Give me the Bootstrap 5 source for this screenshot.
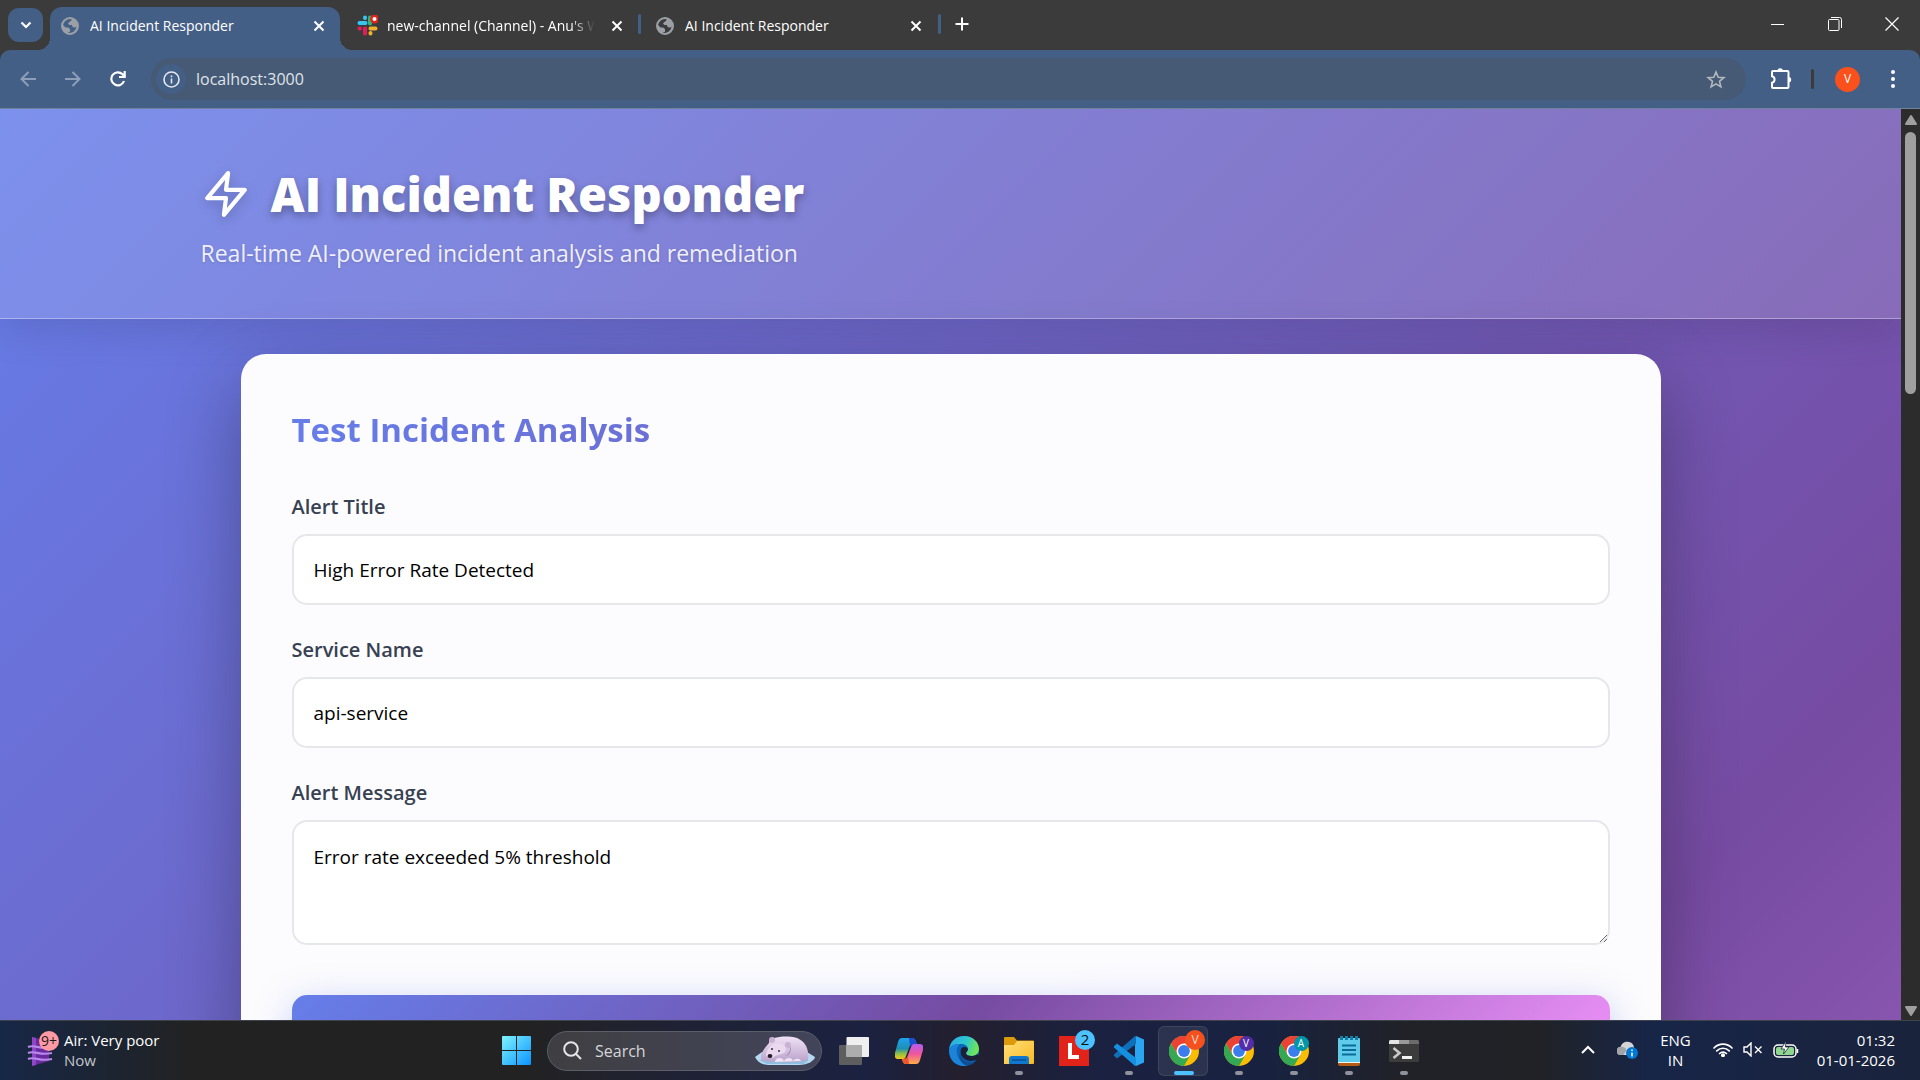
<!DOCTYPE html>
<html lang="en">
<head>
<meta charset="utf-8">
<meta name="viewport" content="width=device-width, initial-scale=1">
<title>AI Incident Responder</title>
<link href="https://cdn.jsdelivr.net/npm/bootstrap@5.3.0/dist/css/bootstrap.min.css" rel="stylesheet">
<style>
  :root { --frame: #3b3b3b; --bar: #445f86; --brand: linear-gradient(135deg, #667eea 0%, #764ba2 50%, #f093fb 100%); }
  body { font-family: "Open Sans", "Noto Sans", sans-serif; font-size: 14px; line-height: 20px; }
  svg { display: block; flex: none; }
  .plain { background: none; border: 0; padding: 0; color: #fff; display: flex; align-items: center; justify-content: center; flex: none; }

  /* tab strip */
  .tabstrip { background: var(--frame); height: 50px; color: #fff; padding-left: 8px; }
  .tab-search { width: 35px; height: 34px; margin: 8px 7px 8px 0; border-radius: 11px; background: var(--bar); }
  .tab-item { height: 43px; width: 290px; margin-top: 7px; padding: 0 11px 6px; position: relative; }
  .tab-item .tab-name { flex: 1 1 0; min-width: 0; overflow: hidden; white-space: nowrap; margin-left: 11px; color: #fff; text-decoration: none; }
  .tab-on { background: var(--bar); border-radius: 12px 12px 0 0; }
  .tab-on::before, .tab-on::after { content: ""; position: absolute; bottom: 0; width: 12px; height: 12px; }
  .tab-on::before { left: -12px; background: radial-gradient(circle at 0 0, transparent 12px, var(--bar) 12px); }
  .tab-on::after { right: -12px; background: radial-gradient(circle at 100% 0, transparent 12px, var(--bar) 12px); }
  .tab-fade { -webkit-mask-image: linear-gradient(90deg, #000 88%, transparent 100%); mask-image: linear-gradient(90deg, #000 88%, transparent 100%); }
  .tab-rule { width: 3px; height: 20px; background: var(--bar); border-radius: 2px; }
  .win-btn { width: 57px; height: 48px; }

  /* address bar */
  .toolbar-wrap { background: var(--frame); }
  .toolbar { background: var(--bar); height: 59px; border-radius: 10px 10px 0 0; border-bottom: 1px solid #6f849c; padding: 0 3px 0 5px; }
  .nav-btn { width: 45px; height: 40px; }
  .omnibox { background: #475a75; height: 42px; border-radius: 21px; margin-left: 11px; padding: 0 20px 0 5px; }
  .site-info { width: 30px; height: 30px; border-radius: 15px; background: var(--bar); }
  .omnibox input { background: none; border: 0; outline: 0; color: #dfe3ea; font-size: 16px; padding: 0; margin-left: 10px; flex: 1; min-width: 0; }
  .avatar { width: 25px; height: 25px; border-radius: 50%; background: #fa511c; font-size: 12px; }

  /* web page */
  .viewport { min-height: 0; overflow: hidden; }
  .webpage { background: var(--brand) 0 0 / 100% 3020px no-repeat; overflow: hidden; min-width: 0; }
  .hero { background: rgba(255,255,255,.15); border-bottom: 1px solid rgba(255,255,255,.35); padding: 51px 0 47px; box-shadow: 0 10px 40px rgba(0,0,0,.12); }
  .wrap { max-width: 1500px; margin: 0 auto; }
  .hero h1 { font-size: 47px; line-height: 68px; font-weight: 800; color: #fff; margin: 0; gap: 20px; text-shadow: 0 4px 8px rgba(0,0,0,.3); }
  .hero h1 svg { filter: drop-shadow(0 4px 6px rgba(0,0,0,.2)); }
  .hero p { font-size: 23px; line-height: 35px; color: rgba(255,255,255,.9); margin: 8px 0 0; text-shadow: 0 1px 3px rgba(0,0,0,.12); }
  .panel { margin: 35px 40px 0; padding: 49px 50px 80px; background: rgba(255,255,255,.98); border: 1px solid rgba(255,255,255,.3); border-radius: 25px; box-shadow: 0 25px 75px rgba(0,0,0,.3); }
  .panel h2 { font-size: 33px; line-height: 52px; font-weight: 700; margin: 0 0 36px; color: transparent; background: linear-gradient(135deg, #667eea, #764ba2); -webkit-background-clip: text; background-clip: text; }
  .panel label { display: block; font-size: 20px; line-height: 30px; font-weight: 600; color: #374151; margin-bottom: 12px; }
  .field { display: block; width: 100%; height: 71px; border: 2px solid #e5e7eb; border-radius: 15px; background: #fff; color: #000; padding: 20px; font-size: 19px; line-height: 30px; margin-bottom: 30px; }
  textarea.field { height: 125px; margin-bottom: 50px; resize: vertical; }
  .go { display: block; width: 100%; height: 80px; border: 0; border-radius: 15px; background: var(--brand); box-shadow: 0 10px 38px rgba(102,126,234,.4); }
  .scroller { width: 19px; background: #2c2c2c; padding: 6px 0 4px; flex: none; }
  .thumb { width: 11px; height: 262px; border-radius: 6px; background: #9f9f9f; margin-top: 7px; }

  /* taskbar */
  .taskbar { height: 60px; border-top: 1px solid #3f434c; color: #fff; font-size: 15px; background: linear-gradient(90deg, #172747 0%, #1d2430 6%, #222 10%, #222 27%, #1f2236 36%, #1b2140 45%, #231f2e 50%, #1b2140 57%, #182240 66%, #212228 73%, #212226 80%, #172547 86%, #1a233c 100%); }
  .task-side { flex: 1 1 0; min-width: 0; padding-bottom: 2px; }
  .task-cell { width: 55px; height: 56px; position: relative; }
  .task-run::after, .task-live::after { content: ""; position: absolute; bottom: 4px; left: 50%; margin-left: -4px; width: 8px; height: 4px; border-radius: 2px; background: #8f929c; }
  .task-live::after { width: 20px; margin-left: -10px; background: #4cc2ff; }
  .task-live::before { content: ""; position: absolute; inset: 3px 3px 3px 2px; border: 1px solid rgba(255,255,255,.09); border-radius: 6px; background: rgba(255,255,255,.08); }
  .task-live svg { position: relative; }
  .task-search { width: 275px; height: 40px; margin: 0 4px 0 3px; border: 1px solid #5b5d68; border-radius: 20px; background: linear-gradient(90deg, #3f3f42, #42445a); padding: 0 5px 0 15px; }
  .task-search input { flex: 1; min-width: 0; background: none; border: 0; outline: 0; color: #fff; font-size: 16px; padding: 0; margin-left: 13px; }
  .task-search input::placeholder { color: #d6d6da; opacity: 1; }
  .dim { color: #c4c6ca; }
</style>
</head>
<body class="vh-100 d-flex flex-column overflow-hidden">

<svg width="0" height="0" class="position-absolute" aria-hidden="true">
  <symbol id="globe" viewBox="0 0 24 24"><path fill="#9aa0a6" d="M12 0a12 12 0 1 0 0 24 12 12 0 0 0 0-24zm0 2.600a9.400 9.400 0 0 1 2.500.35L14 5l-3 1.500-1 2.500 1.500 1.500h3.500l1 3h3.500l1.300-1.500A9.400 9.400 0 0 1 9 20.900l3-1.400V16l-2.500-2H6l-3.200-3.500A9.400 9.400 0 0 1 12 2.600z"/><path fill="#9aa0a6" d="M14 3l6 4 1.500 5-3 2-3-1-1-3h-4l-1-2 4-2z"/></symbol>
  <symbol id="cross" viewBox="0 0 12 12"><path d="M1.500 1.500l9 9M10.500 1.500l-9 9" stroke="#fff" stroke-width="2" fill="none"/></symbol>
  <symbol id="chrome" viewBox="0 0 30 30">
    <circle cx="15" cy="15" r="15" fill="#fbbc04"/>
    <path fill="#ea4335" d="M2 7.500A15 15 0 0 1 28 7.500H15L8.500 18.750z"/>
    <path fill="#34a853" d="M2 7.500A15 15 0 0 0 15 30l6.500-11.250H8.500z"/>
    <circle cx="15" cy="15" r="7.500" fill="#fff"/><circle cx="15" cy="15" r="5.900" fill="#3b7ded"/></symbol>
</svg>

<header class="tabstrip d-flex align-items-start flex-shrink-0">
  <button class="plain tab-search" aria-label="Search tabs"><svg width="12" height="8" viewBox="0 0 12 8"><path d="M1.500 1.500L6 6l4.500-4.500" fill="none" stroke="#fff" stroke-width="2.200"/></svg></button>
  <div class="tab-item tab-on d-flex align-items-center">
    <svg width="18" height="18"><use href="#globe"/></svg><a class="tab-name" href="#">AI Incident Responder</a>
    <button class="plain ms-2 me-1" aria-label="Close tab"><svg width="12" height="12"><use href="#cross"/></svg></button>
  </div>
  <div class="tab-item d-flex align-items-center ms-1">
    <svg style="margin-left:2px" width="21" height="21" viewBox="0 0 21 21"><g stroke-width="4" stroke-linecap="round"><path stroke="#36c5f0" d="M2.500 8h6M8 2.500v.5"/><path stroke="#2eb67d" d="M13 2.500v6"/><path stroke="#ecb22e" d="M13.500 13.500h5M13.500 18v.5"/><path stroke="#e01e5a" d="M8 13.500v5M2.500 13.500h.5"/></g><circle cx="17.500" cy="4" r="4.500" fill="#e0241b"/><circle cx="17.500" cy="4" r="2" fill="#fff"/></svg>
    <a class="tab-name tab-fade" style="margin-left:9px" href="#">new-channel (Channel) - Anu's W</a>
    <button class="plain ms-3" aria-label="Close tab"><svg width="12" height="12"><use href="#cross"/></svg></button>
  </div>
  <span class="tab-rule ms-1" style="margin-top:14px"></span>
  <div class="tab-item d-flex align-items-center pe-2" style="width:293px">
    <svg width="18" height="18" class="ms-1"><use href="#globe"/></svg><a class="tab-name" href="#">AI Incident Responder</a>
    <button class="plain ms-2 me-1" aria-label="Close tab"><svg width="12" height="12"><use href="#cross"/></svg></button>
  </div>
  <span class="tab-rule ms-1" style="margin-top:14px"></span>
  <button class="plain ms-2" style="width:26px;height:48px" aria-label="New tab"><svg width="14" height="14" viewBox="0 0 14 14"><path d="M7 .5v13M.5 7h13" stroke="#fff" stroke-width="2"/></svg></button>
  <div class="ms-auto d-flex">
    <button class="plain win-btn" aria-label="Minimize"><svg width="13" height="13" viewBox="0 0 13 13"><path d="M0 6.500h13" stroke="#fff"/></svg></button>
    <button class="plain win-btn" aria-label="Restore"><svg width="14" height="14" viewBox="0 0 14 14" fill="none" stroke="#fff"><rect x=".5" y="2.500" width="10.500" height="11" rx="1"/><path d="M3 .5h8.500a2 2 0 0 1 2 2V11"/></svg></button>
    <button class="plain win-btn" aria-label="Close"><svg width="14" height="14" viewBox="0 0 14 14"><path d="M.5.5l13 13M13.500.5l-13 13" stroke="#fff" stroke-width="1.200"/></svg></button>
  </div>
</header>

<div class="toolbar-wrap flex-shrink-0">
  <nav class="toolbar d-flex align-items-center">
    <button class="plain nav-btn" aria-label="Back"><svg width="16" height="16" viewBox="0 0 16 16" fill="none" stroke="#8d9fb8" stroke-width="2"><path d="M8.500 1L1.500 8l7 7M1.500 8H16"/></svg></button>
    <button class="plain nav-btn" aria-label="Forward"><svg width="16" height="16" viewBox="0 0 16 16" fill="none" stroke="#8d9fb8" stroke-width="2"><path d="M7.500 1l7 7-7 7M14.500 8H0"/></svg></button>
    <button class="plain nav-btn" aria-label="Reload"><svg width="16" height="16" viewBox="0 0 16 16" fill="none" stroke="#fff" stroke-width="2.200"><path d="M14 10A6.500 6.500 0 1 1 12.500 3.300L14.500 5.300M14.700 0v6H9"/></svg></button>
    <div class="omnibox d-flex align-items-center flex-grow-1">
      <button class="plain site-info" aria-label="Site information"><svg width="17" height="17" viewBox="0 0 17 17" fill="none" stroke="#e3e7ee" stroke-width="1.600"><circle cx="8.500" cy="8.500" r="7.500"/><path d="M8.500 7.500v5M8.500 4.500v1.700"/></svg></button>
      <input type="text" aria-label="Address" value="localhost:3000">
      <button class="plain" aria-label="Bookmark"><svg width="20" height="19" viewBox="0 0 20 19"><path d="M10 2l2.200 5.300 5.700.4-4.400 3.700 1.400 5.500L10 13.900l-4.900 3 1.400-5.500L2.100 7.700l5.700-.4z" fill="none" stroke="#b3b8bf" stroke-width="1.600"/></svg></button>
    </div>
    <button class="plain ms-4" aria-label="Extensions"><svg width="22" height="22" viewBox="0 0 22 22"><path d="M3 3h14.500a1 1 0 0 1 1 1v15a1 1 0 0 1-1 1H3a1 1 0 0 1-1-1v-4.200a3.400 3.400 0 0 0 0-6.600V4a1 1 0 0 1 1-1z" fill="none" stroke="#fff" stroke-width="2"/><path d="M7.500 3a2.700 2.700 0 0 1 5.400 0zM18.500 9a2.700 2.700 0 0 1 0 5.400z" fill="#fff"/></svg></button>
    <span class="tab-rule" style="background:#3b3b3b;margin:0 21px 0 19px"></span>
    <button class="plain avatar" aria-label="Profile">V</button>
    <button class="plain ms-2" style="width:49px;height:40px" aria-label="Menu"><svg width="4" height="18" viewBox="0 0 4 18" fill="#fff"><circle cx="2" cy="2" r="2"/><circle cx="2" cy="9" r="2"/><circle cx="2" cy="16" r="2"/></svg></button>
  </nav>
</div>

<div class="viewport d-flex flex-grow-1">
  <div class="webpage flex-grow-1">
    <div class="hero">
      <div class="wrap">
        <h1 class="d-flex align-items-center"><svg width="50" height="50" viewBox="0 0 24 24" fill="none" stroke="#fff" stroke-width="2" stroke-linecap="round" stroke-linejoin="round"><path d="M13 2L3 14h9l-1 8 10-12h-9l1-8z"/></svg>AI Incident Responder</h1>
        <p>Real-time AI-powered incident analysis and remediation</p>
      </div>
    </div>
    <main class="wrap">
      <form class="panel">
        <h2>Test Incident Analysis</h2>
        <label for="alertTitle">Alert Title</label>
        <input class="field" id="alertTitle" type="text" value="High Error Rate Detected">
        <label for="serviceName">Service Name</label>
        <input class="field" id="serviceName" type="text" value="api-service">
        <label for="alertMessage">Alert Message</label>
        <textarea class="field" id="alertMessage">Error rate exceeded 5% threshold</textarea>
        <button class="go" type="button" aria-label="Analyze"></button>
      </form>
    </main>
  </div>
  <div class="scroller d-flex flex-column align-items-center">
    <svg width="12" height="10" viewBox="0 0 12 10"><path d="M6 1l5 8H1z" fill="#9f9f9f" stroke="#9f9f9f" stroke-linejoin="round" stroke-width="2"/></svg>
    <div class="thumb"></div>
    <svg class="mt-auto" width="12" height="10" viewBox="0 0 12 10"><path d="M6 9l5-8H1z" fill="#9f9f9f" stroke="#9f9f9f" stroke-linejoin="round" stroke-width="2"/></svg>
  </div>
</div>

<footer class="taskbar d-flex align-items-center flex-shrink-0">
  <div class="task-side d-flex align-items-center">
    <svg width="32" height="38" viewBox="0 0 32 38" style="margin-left:27px"><path d="M5 6l17 4v20L5 35z" fill="#6b2a9e"/><path d="M5 6l4 1v27l-4 1z" fill="#8f45c8"/><g fill="none" stroke="#b988ec" stroke-width="2.200"><path d="M1 16c7-3 11 3 24 0M1 22c7-3 11 3 24 0M1 28c7-3 11 3 24 0"/></g><circle cx="22" cy="10" r="10" fill="#ff99a4"/><text x="22" y="15" text-anchor="middle" font-size="14" fill="#1a1a1a" font-family="Open Sans, sans-serif">9+</text></svg>
    <div style="margin-left:5px"><div>Air: Very poor</div><div class="dim">Now</div></div>
  </div>

  <div class="d-flex align-items-center">
    <button class="plain task-cell" aria-label="Start"><svg width="29" height="29" viewBox="0 0 29 29"><defs><linearGradient id="gw" x1="0" y1="0" x2="1" y2="1"><stop offset="0" stop-color="#7ff3ff"/><stop offset="1" stop-color="#0a94ff"/></linearGradient></defs><path fill="url(#gw)" d="M1 0h13v14H0V1a1 1 0 0 1 1-1zM15 0h13a1 1 0 0 1 1 1v13H15zM0 15h14v14H1a1 1 0 0 1-1-1zM15 15h14v13a1 1 0 0 1-1 1H15z"/></svg></button>
    <div class="task-search d-flex align-items-center">
      <svg width="19" height="19" viewBox="0 0 19 19" fill="none" stroke="#e6e6ea" stroke-width="2"><circle cx="8" cy="8" r="6.800"/><path d="M13 13l5 5"/></svg>
      <input type="search" placeholder="Search" aria-label="Search">
      <svg width="62" height="30" viewBox="0 0 62 30"><defs><linearGradient id="gb" x1="0" y1="0" x2="0" y2="1"><stop offset="0" stop-color="#f1e2f5"/><stop offset="1" stop-color="#b9a2cb"/></linearGradient></defs><path d="M1 21l7-5h45l8 5c0 3-7 8-16 8H14C7 29 3 25 1 21z" fill="#b5d9f0"/><path d="M5 24h50l-5 4H13z" fill="#8fbfdf"/><path d="M7 24c-1-8 5-13 8-17 0-4 2-6 5-5 7-2 22-3 28 3 6 5 7 13 6 19-9 3-38 3-47 0z" fill="url(#gb)"/><path d="M33 5c5 4 4 12-2 15 6 0 9-9 2-15z" fill="#ab92bd"/><circle cx="18" cy="4" r="3" fill="#c8b2d4"/><circle cx="34" cy="9" r="3" fill="#c8b2d4"/><path d="M12 20c0-6 5-13 12-13 6 0 10 5 7 9-3 3-9 2-12 6z" fill="#e9d8ee"/><ellipse cx="16" cy="20" rx="2.400" ry="2" fill="#241b2b"/><circle cx="18" cy="13" r="1" fill="#3a2b42"/><circle cx="25" cy="15" r="1" fill="#3a2b42"/><path d="M21 26c0-5 8-5 9-1 2-4 8-4 9 0 2-3 7-3 8 0z" fill="#eee2f3"/></svg>
    </div>
    <button class="plain task-cell" aria-label="Task view"><svg width="30" height="28" viewBox="0 0 30 28"><rect y="8" width="23" height="20" rx="1" fill="#5e5e5f"/><rect x="7.500" width="22.500" height="20" rx="1" fill="#f0f0f0"/><path d="M7.500 8H23v12H7.500z" fill="#adadae"/></svg></button>
    <button class="plain task-cell" aria-label="Copilot"><svg width="28" height="26" viewBox="0 0 28 26"><defs><linearGradient id="gc" x1="0" y1="0" x2="0" y2="1"><stop offset="0" stop-color="#1fa3ee"/><stop offset=".5" stop-color="#1c8fb5"/><stop offset=".75" stop-color="#8fc043"/><stop offset="1" stop-color="#f5c51c"/></linearGradient><linearGradient id="gd" x1="0" y1="0" x2="0" y2="1"><stop offset="0" stop-color="#b25cf0"/><stop offset=".5" stop-color="#f0569b"/><stop offset="1" stop-color="#ffae4a"/></linearGradient></defs><path d="M7 0h10c2 0 3 1 4 4l1 2h-3c-3 0-4 1-5 4l-3 8c-1 3-2 3-4 3H3c-3 0-4-3-3-6L3 4c1-3 2-4 4-4z" fill="url(#gc)"/><path d="M14 0h3c2 0 3 1 4 4l1 2h-3c-2 0-3 1-4 2z" fill="#1d4fd0"/><path d="M21 26H11c-2 0-3-1-4-5h2c2 0 3-1 4-4l3-8c1-3 2-3 4-3h5c3 0 4 3 3 6l-3 10c-1 3-2 4-4 4z" fill="url(#gd)"/><path d="M14 26h-3c-2 0-3-1-4-5h2c2 0 3-1 4-3z" fill="#f0562e"/></svg></button>
    <button class="plain task-cell" aria-label="Edge"><svg width="30" height="30" viewBox="0 0 30 30"><defs><linearGradient id="ge" x1="0" y1="0" x2="1" y2=".3"><stop offset="0" stop-color="#2aa6e8"/><stop offset=".6" stop-color="#2fc6cf"/><stop offset="1" stop-color="#6be35c"/></linearGradient></defs><circle cx="15" cy="15" r="15" fill="#0c66b8"/><path d="M0 14C1 5 7 0 15 0c9 0 15 6 15 13 0 5-4 7-7 7-4 0-6-1-6-3 0-1 2-2 2-4 0-3-3-5-7-5C6 8 1 10 0 14z" fill="url(#ge)"/><path d="M0 14C1 9 6 7.500 11 8c-3 2-4 6-3 10 1 5 5 9 10 11.700C8 31.500 0 25 0 14z" fill="#1b84d8"/><path d="M12 13c2-3 6-2 7 0 0 2-2 3-2 4 0 2 2 3 6 3 2 0 4-1 6-2l1 4c-2 1-5 3-8 3-7 0-12-6-10-12z" fill="#1b1f38"/><path d="M11 17c1 6 6 9 11 9 2 0 4-1 5.500-1.800A15 15 0 0 1 18 29.700C12 28 9 22 11 17z" fill="#0e4f96"/></svg></button>
    <button class="plain task-cell task-run" aria-label="File Explorer"><svg width="30" height="27" viewBox="0 0 30 27"><defs><linearGradient id="gf" x1="0" y1="0" x2="1" y2="1"><stop offset="0" stop-color="#ffe07a"/><stop offset="1" stop-color="#fbb822"/></linearGradient></defs><path d="M0 1a1 1 0 0 1 1-1h9l3 3.500h16a1 1 0 0 1 1 1V12H0z" fill="#dd9a09"/><path d="M0 8h10l3-4h16a1 1 0 0 1 1 1v21a1 1 0 0 1-1 1H0z" fill="url(#gf)"/><path d="M5 27v-5a3 3 0 0 1 3-3h14a3 3 0 0 1 3 3v5z" fill="#1177cf"/><path d="M8 23h14" stroke="#0a4f96" stroke-width="1.500"/></svg></button>
    <button class="plain task-cell" aria-label="L app"><svg width="38" height="42" viewBox="0 0 38 42" style="margin-left:6px"><path d="M1 6h30v30H1z" fill="#e2231a"/><path d="M10 13h4v12h7v4H10z" fill="#fff"/><circle cx="27" cy="10" r="10" fill="#4cc2ff"/><text x="27" y="15" text-anchor="middle" font-size="15" fill="#111" font-family="Open Sans, sans-serif">2</text></svg></button>
    <button class="plain task-cell task-run" aria-label="Code"><svg width="30" height="30" viewBox="0 0 30 30"><path d="M22 0l8 3.500v23L22 30l-1-2V2z" fill="#2aa5f2"/><path d="M22 8L3 22.500 0 19.800v-1.300L21 0l1 .5z" fill="#0f6fb8"/><path d="M22 22L3 7.500 0 10.200v1.300L21 30l1-.5z" fill="#1590e0"/></svg></button>
    <button class="plain task-cell task-live" aria-label="Chrome"><svg width="38" height="42" viewBox="0 0 38 42" style="margin-left:6px"><use href="#chrome" x="1" y="6" width="30" height="30"/><circle cx="27" cy="10" r="10" fill="#f4511e"/><text x="27" y="14" text-anchor="middle" font-size="12" fill="#ffd9cc" font-family="Open Sans, sans-serif">V</text></svg></button>
    <button class="plain task-cell task-run" aria-label="Chrome, profile V"><svg width="30" height="30"><use href="#chrome" width="30" height="30"/><circle cx="22.500" cy="7.500" r="7.500" fill="#512da8"/><text x="22" y="11" text-anchor="middle" font-size="10" fill="#fff" font-family="Open Sans, sans-serif">V</text></svg></button>
    <button class="plain task-cell task-run" aria-label="Chrome, profile A"><svg width="30" height="30"><use href="#chrome" width="30" height="30"/><circle cx="22.500" cy="7.500" r="7.500" fill="#0097a7"/><text x="22" y="11" text-anchor="middle" font-size="10" fill="#fff" font-family="Open Sans, sans-serif">A</text></svg></button>
    <button class="plain task-cell task-run" aria-label="Notepad"><svg width="22" height="30" viewBox="0 0 22 30"><path d="M0 24h22v4a2 2 0 0 1-2 2H2a2 2 0 0 1-2-2z" fill="#b45a14"/><path d="M0 25h22v2H0z" fill="#f2f2f2"/><path d="M0 3a1 1 0 0 1 1-1h20a1 1 0 0 1 1 1v23H0z" fill="#5ecbea"/><path d="M4 9.500h14M4 14h14M4 18.500h14" stroke="#0b6a9a" stroke-width="2"/><path d="M3.500 0v4M8.500 0v4M13.500 0v4M18.500 0v4" stroke="#147ea8" stroke-width="3"/></svg></button>
    <button class="plain task-cell task-run" aria-label="Terminal"><svg width="30" height="22" viewBox="0 0 30 22"><rect width="30" height="22" rx="1.500" fill="#3c3c3d"/><path d="M0 1.500A1.500 1.500 0 0 1 1.500 0H10v4H0z" fill="#e4e4e4"/><path d="M10 0h10v4H10z" fill="#9a9a9a"/><path d="M20 0h8.500A1.500 1.500 0 0 1 30 1.500V4H20z" fill="#6b6b6b"/><path d="M4.500 8l6 5-6 5" fill="none" stroke="#c9c9c9" stroke-width="2.600"/><path d="M13 17.500h10" stroke="#f1f1f1" stroke-width="3"/></svg></button>
  </div>

  <div class="task-side d-flex align-items-center justify-content-end text-nowrap">
    <button class="plain" aria-label="Show hidden icons"><svg width="14" height="9" viewBox="0 0 14 9"><path d="M1 8l6-6 6 6" fill="none" stroke="#fff" stroke-width="2"/></svg></button>
    <svg width="21" height="18" viewBox="0 0 21 18" style="margin-left:22px"><path d="M4 14a4 4 0 0 1-.5-8C5 1 9 0 12 1c3 .5 5 3 5 6 2 1 2 7-2 7z" fill="#d5d5d8"/><path d="M4 14a4 4 0 0 1-.5-8c3-1 5 1 6 3l-3 5z" fill="#a3a4a8"/><circle cx="15" cy="12" r="6" fill="#0078d4"/><path d="M15 11.500v4M15 8.500v1.500" stroke="#fff" stroke-width="1.500"/></svg>
    <div class="text-center" style="margin-left:22px">ENG<br>IN</div>
    <svg width="20" height="15" viewBox="0 0 20 15" fill="none" stroke="#fff" stroke-width="1.700" stroke-linecap="round" style="margin-left:22px"><path d="M1 6a12.500 12.500 0 0 1 18 0M3.800 8.900a8.600 8.600 0 0 1 12.400 0M6.600 11.500a4.800 4.800 0 0 1 6.800 0"/><circle cx="10" cy="13.200" r="1.200" fill="#fff"/></svg>
    <svg width="20" height="15" viewBox="0 0 20 15" fill="none" stroke="#fff" stroke-width="1.400" style="margin-left:10px"><path d="M1 5h3l4-4v13l-4-4H1zM12 4.500l6.500 6.500M18.500 4.500L12 11"/></svg>
    <svg width="26" height="18" viewBox="0 0 26 18" style="margin-left:10px"><rect x="1" y="4" width="22" height="12" rx="4" fill="#1b2440" stroke="#fff" stroke-width="1.500"/><rect x="3" y="6" width="18" height="8" rx="2" fill="#8fd68f"/><path d="M24.500 8v4" stroke="#fff" stroke-width="1.500"/><path d="M13 0L8 8h3.500l-1 5L16 6h-3.500z" fill="#fff" stroke="#1b2440" stroke-width=".8"/></svg>
    <div class="text-end" style="margin:0 25px 0 18px">01:32<br>01-01-2026</div>
  </div>
</footer>
<script src="https://cdn.jsdelivr.net/npm/bootstrap@5.3.0/dist/js/bootstrap.bundle.min.js"></script>
</body>
</html>
